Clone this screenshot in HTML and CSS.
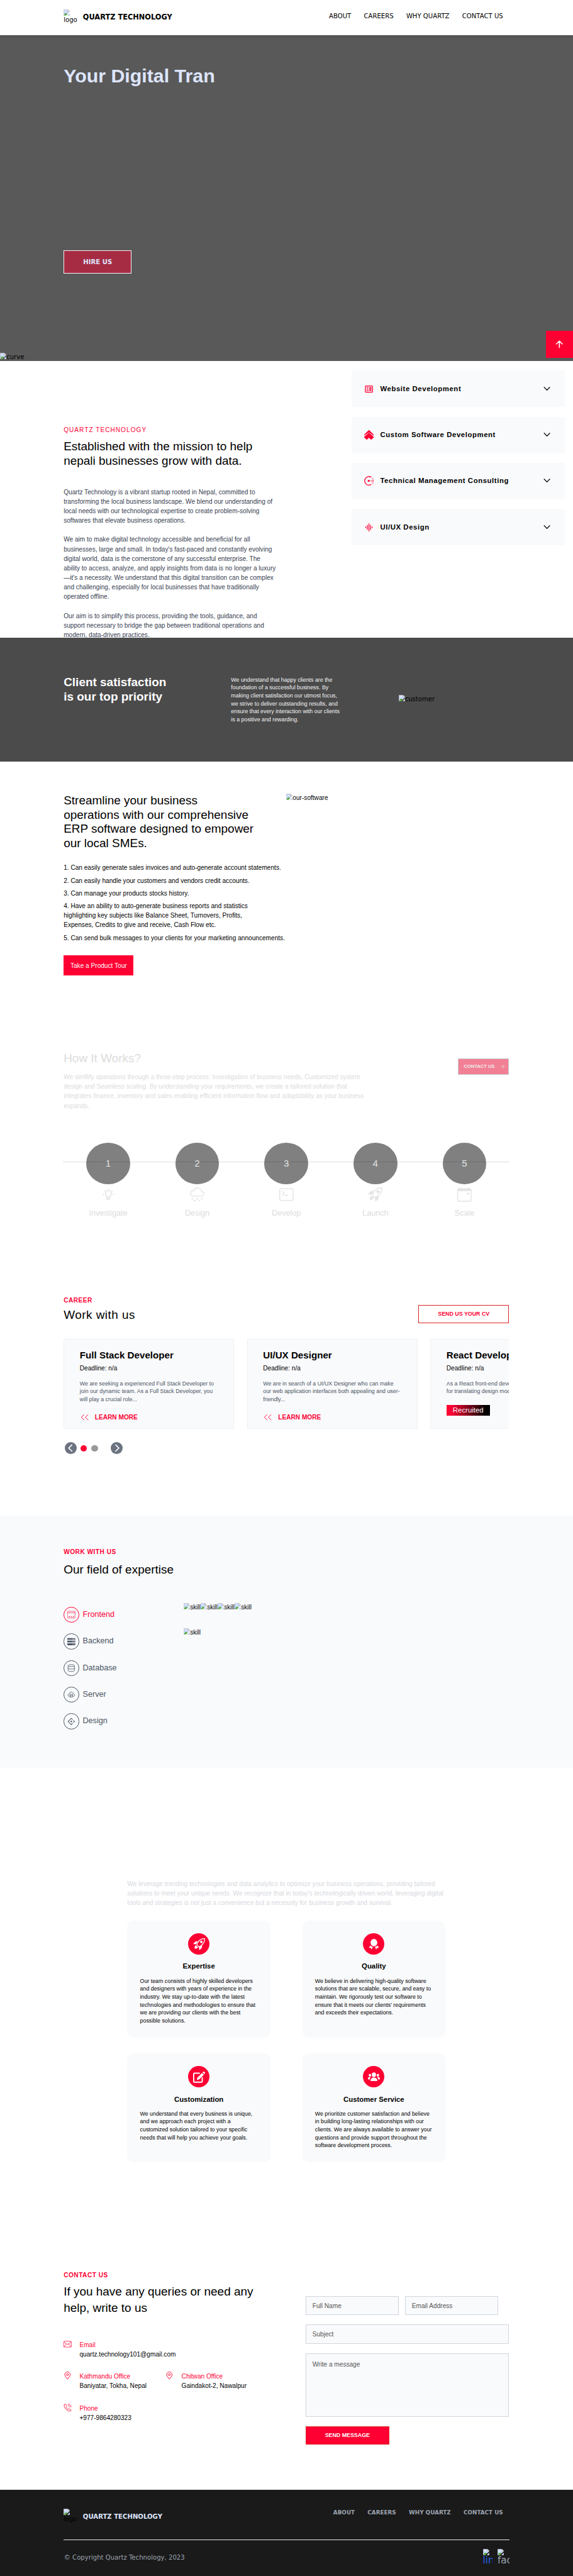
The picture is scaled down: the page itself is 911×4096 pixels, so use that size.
FILE: index.html
```html
<!DOCTYPE html>
<html lang="en">
<head>
<meta charset="utf-8">
<title>Quartz Technology</title>
<link rel="stylesheet" href="styles.css">
</head>
<body>
<svg class="defs" width="0" height="0">
  <symbol id="broken" viewBox="0 0 16 16">
    <path d="M.5.5h10.200l4.800 4.800v10.200H.5z" fill="#fff" stroke="#a0a0a0"/>
    <path d="M1 1h9.500v5H15v9H1z" fill="#c3d3f7"/>
    <path d="M3 5.500a1.500 1.500 0 0 1 2.500-1.500 1.400 1.400 0 0 1 2.300 1.500z" fill="#fff"/>
    <path d="M1 15c1-3.500 3-5.500 5.500-5.500S10 12 11 15z" fill="#56ab34"/>
    <path d="M16 5.500v3.500L9 16H5.500z" fill="var(--cut, #fff)"/>
    <path d="M10.700.5v4.800h4.800z" fill="#fff" stroke="#a0a0a0"/>
  </symbol>
  <symbol id="rocket" viewBox="0 0 16 16">
    <path d="M15.400.6C12.500.3 9.600 1.500 7.400 4 5.900 5.700 5 7.600 5.400 9c.3 1 1 1.500 1.800 1.800 1.500.5 3.300-.5 4.900-2.200 2.400-2.500 3.600-5 3.300-8z" fill="none" stroke="currentColor" stroke-width="1.100"/>
    <circle cx="11.100" cy="4.800" r="1.700"/>
    <path d="M6.400 4.100C4.900 3.700 3.500 3.900 2.500 4.900L0 7.800l3 .1 1.200.6c.2-1.600 1-3 2.200-4.400zM12 9.500c.3 1.500.1 3-.9 4L8.200 16 8 13l-.4-1.300c1.500-.2 2.900-1 4.400-2.200zM3.600 9.300C2.300 10.200 2 12 2 14c2 0 3.700-.5 4.700-1.800z"/>
  </symbol>
  <symbol id="chev" viewBox="0 0 24 24"><path d="M5 7.600l7 7.200 7-7.200" fill="none" stroke="#000" stroke-width="2" stroke-linecap="round" stroke-linejoin="round"/></symbol>
  <symbol id="dbl" viewBox="0 0 24 24"><path d="M11 5l-7.500 7 7.500 7M21 5l-7.500 7 7.500 7" fill="none" stroke="currentColor" stroke-width="1.400"/></symbol>
  <symbol id="pin" viewBox="0 0 20 20"><path d="M10 19C6.500 14.500 3.200 11.200 3.200 7.700a6.800 6.800 0 0 1 13.600 0c0 3.500-3.300 6.800-6.800 11.300z" fill="none" stroke="currentColor" stroke-width="1.500"/><circle cx="10" cy="7.800" r="2.300" fill="none" stroke="currentColor" stroke-width="1.500"/></symbol>
</svg>
<div class="page">
  <header class="top">
    <div class="brand">
      <span class="logo"><svg class="bi"><use href="#broken"/></svg><span>logo</span></span>
      <strong>QUARTZ TECHNOLOGY</strong>
    </div>
    <nav><a>ABOUT</a><a>CAREERS</a><a>WHY QUARTZ</a><a>CONTACT US</a></nav>
  </header>

  <section class="hero">
    <h1>Your Digital Tran</h1>
    <a class="hire">HIRE US</a>
    <span class="curve alt"><svg class="bi"><use href="#broken"/></svg>curve</span>
    <a class="to-top"><svg viewBox="0 0 20 20" width="20" height="20"><path d="M10 18V2.500M2.500 9.500L10 2l7.500 7.500" fill="none" stroke="#fff" stroke-width="2.600" stroke-linecap="round" stroke-linejoin="round"/></svg></a>
  </section>

  <section class="about">
    <div class="about-text">
      <p class="eyebrow thin">QUARTZ TECHNOLOGY</p>
      <h2>Established with the mission to help<br>nepali businesses grow with data.</h2>
      <p class="copy">Quartz Technology is a vibrant startup rooted in Nepal, committed to<br>transforming the local business landscape. We blend our understanding of<br>local needs with our technological expertise to create problem-solving<br>softwares that elevate business operations.</p>
      <p class="copy">We aim to make digital technology accessible and beneficial for all<br>businesses, large and small. In today's fast-paced and constantly evolving<br>digital world, data is the cornerstone of any successful enterprise. The<br>ability to access, analyze, and apply insights from data is no longer a luxury<br>—it's a necessity. We understand that this digital transition can be complex<br>and challenging, especially for local businesses that have traditionally<br>operated offline.</p>
      <p class="copy">Our aim is to simplify this process, providing the tools, guidance, and<br>support necessary to bridge the gap between traditional operations and<br>modern, data-driven practices.</p>
    </div>
    <div class="accordion">
      <div class="item"><svg class="ic24" viewBox="0 0 24 24"><rect x="3" y="4" width="18" height="16" rx="1.500" fill="none" stroke="currentColor" stroke-width="2"/><path d="M6 7h5v2H6zM6 11h5v2H6zM6 15h5v2H6z"/><path d="M14 8h3v8h-3z" fill="none" stroke="currentColor" stroke-width="2"/></svg><b>Website Development</b><svg class="ic24 chev"><use href="#chev"/></svg></div>
      <div class="item"><svg class="ic24" viewBox="0 0 24 24"><path d="M12 0c.6 0 1 .2 1.500.6l10 10c.5.500.5 1.400.5 2.900L12 5.400.0 13.500c0-1.500 0-2.400.5-2.900l10-10C11 .2 11.400 0 12 0z"/><path d="M12 6.500l11.300 9.200c.9.800.9 2.300 0 3.200l-4.200 4.200c-.9.900-2.200.9-3.100 0l-4-4-4 4c-.9.900-2.200.9-3.100 0L.7 18.900c-.9-.9-.9-2.400 0-3.200z"/></svg><b>Custom Software Development</b><svg class="ic24 chev"><use href="#chev"/></svg></div>
      <div class="item"><svg class="ic24" viewBox="0 0 24 24"><path d="M18 3a10.800 10.800 0 1 0 0 18" fill="none" stroke="currentColor" stroke-width="2.100"/><circle cx="11.500" cy="12" r="2.600"/><circle cx="16.500" cy="12" r="1.100"/><circle cx="19.600" cy="10" r="1"/><circle cx="19.600" cy="14" r="1"/><circle cx="20" cy="12" r=".8"/><circle cx="23" cy="12" r="1"/><circle cx="23" cy="9.700" r="1"/><circle cx="23" cy="14.300" r="1"/><circle cx="21.400" cy="6.400" r="1.100"/><circle cx="21.400" cy="17.700" r="1.100"/></svg><b>Technical Management Consulting</b><svg class="ic24 chev"><use href="#chev"/></svg></div>
      <div class="item"><svg class="ic24" viewBox="0 0 24 24"><path d="M11 2h2v20h-2zM7 6h2v12H7zM15 6h2v12h-2zM3 10h2v4H3zM19 10h2v4h-2z"/></svg><b>UI/UX Design</b><svg class="ic24 chev"><use href="#chev"/></svg></div>
    </div>
  </section>

  <section class="client">
    <h2>Client satisfaction<br>is our top priority</h2>
    <p>We understand that happy clients are the<br>foundation of a successful business. By<br>making client satisfaction our utmost focus,<br>we strive to deliver outstanding results, and<br>ensure that every interaction with our clients<br>is a positive and rewarding.</p>
    <span class="alt cust"><svg class="bi"><use href="#broken"/></svg>customer</span>
  </section>

  <section class="erp">
    <div class="erp-text">
      <h2>Streamline your business<br>operations with our comprehensive<br>ERP software designed to empower<br>our local SMEs.</h2>
      <ul>
        <li>1. Can easily generate sales invoices and auto-generate account statements.</li>
        <li>2. Can easily handle your customers and vendors credit accounts.</li>
        <li>3. Can manage your products stocks history.</li>
        <li>4. Have an ability to auto-generate business reports and statistics<br>highlighting key subjects like Balance Sheet, Turnovers, Profits,<br>Expenses, Credits to give and receive, Cash Flow etc.</li>
        <li>5. Can send bulk messages to your clients for your marketing announcements.</li>
      </ul>
      <a class="tour">Take a Product Tour</a>
    </div>
    <span class="alt sans"><svg class="bi"><use href="#broken"/></svg>our-software</span>
  </section>

  <section class="how">
    <div class="how-head">
      <div>
        <h2>How It Works?</h2>
        <p>We simflify operations through a three-step process: Investigation of business needs, Customized system<br>design and Seamless scaling. By understanding your requirements, we create a tailored solution that<br>integrates finance, inventory and sales enabling efficient information flow and adaptability as your business<br>expands.</p>
      </div>
      <a class="contact-btn">CONTACT US<svg viewBox="0 0 12 12" width="12" height="12"><path d="M1.500 6h9M6.500 1.500L11 6l-4.500 4.500" fill="none" stroke="currentColor"/></svg></a>
    </div>
    <div class="steps">
      <div class="step"><span class="num">1</span><svg viewBox="0 0 36 36"><g fill="none" stroke="currentColor" stroke-width="2.500" stroke-linecap="round"><path d="M14.500 25v-2.500c-2.500-1.800-4-4-4-7a7.500 7.500 0 0 1 15 0c0 3-1.500 5.200-4 7V25z"/><path d="M15 25v4c0 3 6 3 6 0v-4M18 4.500v1.500M8 8.500l1 1M28 8.500l-1 1M4.500 18H6M30 18h1.500"/></g></svg><span class="name">Investigate</span></div>
      <div class="step"><span class="num">2</span><svg viewBox="0 0 16 16"><path d="M13.405 4.277a5.001 5.001 0 0 0-9.499-1.004A3.500 3.500 0 1 0 3.500 10.250H13a3 3 0 0 0 .405-5.973zM8.500 1.250a4 4 0 0 1 3.976 3.555.5.5 0 0 0 .5.445H13a2 2 0 0 1-.001 4H3.500a2.500 2.500 0 1 1 .605-4.926.5.5 0 0 0 .596-.329A4.002 4.002 0 0 1 8.500 1.250z"/><path id="flake" d="M2.600 11.600v2.200M1.700 12.200l1.800 1M3.500 12.200l-1.800 1" stroke="currentColor" stroke-width=".6"/><use href="#flake" x="5.400"/><use href="#flake" x="10.700"/><use href="#flake" x="2.700" y="2.100"/><use href="#flake" x="8.200" y="2.100"/></svg><span class="name">Design</span></div>
      <div class="step"><span class="num">3</span><svg viewBox="0 0 16 16"><path d="M6 9a.5.5 0 0 1 .5-.5h3a.5.5 0 0 1 0 1h-3A.5.5 0 0 1 6 9zM3.854 4.146a.5.5 0 1 0-.708.708L4.793 6.500 3.146 8.146a.5.5 0 1 0 .708.708l2-2a.5.5 0 0 0 0-.708l-2-2z"/><path d="M2 1a2 2 0 0 0-2 2v10a2 2 0 0 0 2 2h12a2 2 0 0 0 2-2V3a2 2 0 0 0-2-2H2zm12 1a1 1 0 0 1 1 1v10a1 1 0 0 1-1 1H2a1 1 0 0 1-1-1V3a1 1 0 0 1 1-1h12z"/></svg><span class="name">Develop</span></div>
      <div class="step"><span class="num">4</span><svg><use href="#rocket"/></svg><span class="name">Launch</span></div>
      <div class="step"><span class="num">5</span><svg viewBox="0 0 16 16"><path d="M2 1h1V0h1v1h8V0h1v1h1a2 2 0 0 1 2 2v11a2 2 0 0 1-2 2H2a2 2 0 0 1-2-2V3a2 2 0 0 1 2-2zM1 4v10a1 1 0 0 0 1 1h12a1 1 0 0 0 1-1V4z"/><rect x="11" y="6" width="2" height="2" rx=".5"/></svg><span class="name">Scale</span></div>
    </div>
  </section>

  <section class="career">
    <p class="eyebrow">CAREER</p>
    <div class="career-head"><h2>Work with us</h2><a class="cv">SEND US YOUR CV</a></div>
    <div class="jobs">
      <article><h3>Full Stack Developer</h3><p class="dl">Deadline: n/a</p><p class="ds">We are seeking a experienced Full Stack Developer to<br>join our dynamic team. As a Full Stack Developer, you<br>will play a crucial role...</p><a class="more"><svg><use href="#dbl"/></svg>LEARN MORE</a></article>
      <article><h3>UI/UX Designer</h3><p class="dl">Deadline: n/a</p><p class="ds">We are in search of a UI/UX Designer who can make<br>our web application interfaces both appealing and user-<br>friendly...</p><a class="more"><svg><use href="#dbl"/></svg>LEARN MORE</a></article>
      <article><h3>React Developer</h3><p class="dl">Deadline: n/a</p><p class="ds">As a React front-end developer, you are responsible<br>for translating design mockups into code.</p><span class="badge">Recruited</span></article>
    </div>
    <div class="pager">
      <span class="arr"><svg viewBox="0 0 30 30"><path d="M18 7l-8 8 8 8" fill="none" stroke="#fff" stroke-width="2.600" stroke-linecap="round"/></svg></span>
      <i class="dot on"></i><i class="dot"></i>
      <span class="arr next"><svg viewBox="0 0 30 30"><path d="M12.500 7l8 8-8 8" fill="none" stroke="#fff" stroke-width="2.600" stroke-linecap="round"/></svg></span>
    </div>
  </section>

  <section class="field">
    <p class="eyebrow">WORK WITH US</p>
    <h2>Our field of expertise</h2>
    <div class="field-body">
      <ul class="tabs">
        <li class="on"><span><svg viewBox="0 0 20 20"><path d="M2.500 1.500h15a2 2 0 0 1 2 2v13a2 2 0 0 1-2 2h-15a2 2 0 0 1-2-2v-13a2 2 0 0 1 2-2zM.5 5.500h19" fill="none" stroke="currentColor"/><circle cx="5" cy="15" r="1.300"/><circle cx="10" cy="15" r="1.300"/><circle cx="15" cy="15" r="1.300"/></svg></span>Frontend</li>
        <li><span><svg viewBox="0 0 20 20"><path fill-rule="evenodd" d="M1 1h18a1 1 0 0 1 1 1v3H0V2a1 1 0 0 1 1-1zM13 2.500v1.500h1.500V2.500zM16 2.500v1.500h1.500V2.500zM0 7.500h20v4.500H0zM13 9v1.500h1.500V9zM16 9v1.500h1.500V9zM0 14.300h20v3.500a1 1 0 0 1-1 1H1a1 1 0 0 1-1-1zM13 15.700v1.500h1.500v-1.500zM16 15.700v1.500h1.500v-1.500z"/></svg></span>Backend</li>
        <li><span><svg viewBox="0 0 20 20"><g fill="none" stroke="currentColor" stroke-width="1.300"><ellipse cx="10" cy="4" rx="8" ry="2.700"/><path d="M2 4v12c0 3.500 16 3.500 16 0V4M2 10c0 3.500 16 3.500 16 0"/></g></svg></span>Database</li>
        <li><span><svg viewBox="0 0 20 20"><g fill="none" stroke="currentColor" stroke-width="1.200"><path d="M5 15.200A3.500 3.500 0 0 1 4.600 8.300a5.500 5.500 0 0 1 10.800 0A3.500 3.500 0 0 1 15 15.200"/><path d="M6.500 9.500h7v7h-7zM6.500 13h7M8 11.300h1M8 14.800h1"/></g></svg></span>Server</li>
        <li><span><svg viewBox="0 0 20 20"><path d="M13.500 5.500L10 2l-8 8 8 8 3.500-3.500M15.200 7.200L18 10l-2.800 2.800" fill="none" stroke="currentColor" stroke-width="1.600"/><circle cx="10" cy="10" r="2"/></svg></span>Design</li>
      </ul>
      <div class="skills">
        <div><span class="alt sans"><svg class="bi"><use href="#broken"/></svg>skill</span><span class="alt sans"><svg class="bi"><use href="#broken"/></svg>skill</span><span class="alt sans"><svg class="bi"><use href="#broken"/></svg>skill</span><span class="alt sans"><svg class="bi"><use href="#broken"/></svg>skill</span></div>
        <div><span class="alt sans"><svg class="bi"><use href="#broken"/></svg>skill</span></div>
      </div>
    </div>
  </section>

  <section class="why">
    <p class="lead">We leverage trending technologies and data analytics to optimize your business operations, providing tailored<br>solutions to meet your unique needs. We recognize that in today's technologically driven world, leveraging digital<br>tools and strategies is not just a convenience but a necessity for business growth and survival.</p>
    <div class="cards">
      <article><span class="orb"><svg><use href="#rocket"/></svg></span><h3>Expertise</h3><p>Our team consists of highly skilled developers<br>and designers with years of experience in the<br>industry. We stay up-to-date with the latest<br>technologies and methodologies to ensure that<br>we are providing our clients with the best<br>possible solutions.</p></article>
      <article><span class="orb"><svg viewBox="0 0 30 30"><ellipse cx="15" cy="11" rx="8.500" ry="9.300"/><path d="M5.500 18l-3 6 4-.3 3 4.300 3-6.500c-3-.5-5-2-7-3.500zM24.500 18l3 6-4-.3-3 4.300-3-6.500c3-.5 5-2 7-3.500z"/></svg></span><h3>Quality</h3><p>We believe in delivering high-quality software<br>solutions that are scalable, secure, and easy to<br>maintain. We rigorously test our software to<br>ensure that it meets our clients' requirements<br>and exceeds their expectations.</p></article>
      <article><span class="orb"><svg viewBox="0 0 30 30"><path d="M17 5.500H3.500a2 2 0 0 0-2 2V26a2 2 0 0 0 2 2H21a2 2 0 0 0 2-2V16" fill="none" stroke="currentColor" stroke-width="3"/><path d="M9.500 22.500l1-5.500L22.500 5l4.500 4.500-12 12zM23.800 3.700l1.500-1.500c.8-.8 2-.8 2.800 0l1.500 1.500c.8.8.8 2 0 2.800L28.200 8z"/></svg></span><h3>Customization</h3><p>We understand that every business is unique,<br>and we approach each project with a<br>customized solution tailored to your specific<br>needs that will help you achieve your goals.</p></article>
      <article><span class="orb"><svg viewBox="0 0 30 30"><ellipse cx="15" cy="9.500" rx="5.300" ry="5.800"/><ellipse cx="5" cy="10.500" rx="3" ry="3.500"/><ellipse cx="25" cy="10.500" rx="3" ry="3.500"/><path d="M6.500 24c0-5 3-7.500 8.500-7.500s8.500 2.500 8.500 7.500c0 1-.5 1.500-1.500 1.500H8c-1 0-1.500-.5-1.500-1.500zM0 19.500c0-3.500 2-4.500 7.500-4.500-2 1.500-3 4-3 6.500H1.500c-1 0-1.500-.7-1.500-2zM30 19.500c0-3.500-2-4.500-7.500-4.500 2 1.500 3 4 3 6.500h3c1 0 1.500-.7 1.500-2z"/></svg></span><h3>Customer Service</h3><p>We prioritize customer satisfaction and believe<br>in building long-lasting relationships with our<br>clients. We are always available to answer your<br>questions and provide support throughout the<br>software development process.</p></article>
    </div>
  </section>

  <section class="contact">
    <div class="info">
      <p class="eyebrow">CONTACT US</p>
      <h2>If you have any queries or need any<br>help, write to us</h2>
      <div class="rows">
        <div class="row"><svg viewBox="0 0 20 20"><g fill="none" stroke="currentColor" stroke-width="1.200"><rect x=".6" y="2.600" width="18.800" height="14.800" rx="1.500"/><path d="M.8 4.500l9.200 6.500 9.200-6.500M.8 16.500l7-7M19.200 16.500l-7-7"/></g></svg><p><em>Email</em>quartz.technology101@gmail.com</p></div>
        <div class="row"><svg><use href="#pin"/></svg><p><em>Kathmandu Office</em>Baniyatar, Tokha, Nepal</p></div>
        <div class="row"><svg><use href="#pin"/></svg><p><em>Chitwan Office</em>Gaindakot-2, Nawalpur</p></div>
        <div class="row"><svg viewBox="0 0 20 20"><g fill="none" stroke="currentColor" stroke-width="1.400" stroke-linecap="round"><path d="M2 2.500C4 .5 5.500 1 6.500 2.800L8 5.500c.5 1-1.500 2-1.500 3 0 1.500 3.500 5.500 5 5.500 1 0 2-1.500 3-1l3.500 2c1.500 1 .5 4-2 4C10 19-1.500 8 2 2.500zM12 1c4 .5 6.500 3 7 7M11.500 4.500c2.300.3 4 2 4.200 4"/></g></svg><p><em>Phone</em>+977-9864280323</p></div>
      </div>
    </div>
    <form>
      <div class="pair"><div class="inp">Full Name</div><div class="inp">Email Address</div></div>
      <div class="inp">Subject</div>
      <div class="inp area">Write a message</div>
      <a class="send">SEND MESSAGE</a>
    </form>
  </section>

  <footer>
    <div class="foot-top">
      <div class="brand">
        <span class="logo"><svg class="bi"><use href="#broken"/></svg><span>logo</span></span>
        <strong>QUARTZ TECHNOLOGY</strong>
      </div>
      <nav><a>ABOUT</a><a>CAREERS</a><a>WHY QUARTZ</a><a>CONTACT US</a></nav>
    </div>
    <div class="foot-bottom">
      <p>© Copyright Quartz Technology, 2023</p>
      <div class="social">
        <span class="lin"><svg class="bi"><use href="#broken"/></svg><span>linkedin</span></span>
        <span class="fb"><svg class="bi"><use href="#broken"/></svg><span>facebook</span></span>
      </div>
    </div>
  </footer>
</div>
</body>
</html>
```
FILE: styles.css
```css
* { box-sizing: border-box; margin: 0; padding: 0; }
html, body { background: #fff; overflow: hidden; }
.defs { position: absolute; }
.page {
  zoom: 0.6323;
  font: 16px/24px "Liberation Sans", Arial, sans-serif;
  color: #000;
  height: 6478px;
  overflow: hidden;
  white-space: nowrap;
}
svg { fill: currentColor; flex: none; display: block; }
ul { list-style: none; }
h2 { font-size: 30px; line-height: 36px; font-weight: 400; }
.bi { width: 16px; height: 16px; }
.alt { display: flex; align-items: flex-start; font: 16px/22px "DejaVu Sans", sans-serif; }
.alt.sans { font-family: "Liberation Sans", Arial, sans-serif; }
.eyebrow { color: #ff0033; font-weight: 700; letter-spacing: .8px; }
.eyebrow.thin { font-weight: 400; letter-spacing: 1.6px; }

/* header */
.top {
  position: relative; z-index: 2; height: 88px; padding: 24px 160px 0;
  display: flex; justify-content: space-between; background: #fff;
  box-shadow: 0 2px 8px rgba(0, 0, 0, .2);
  font-family: "DejaVu Sans", sans-serif;
}
.brand { display: flex; gap: 13.500px; }
.logo { width: 35px; line-height: 22px; }
.logo span { display: block; }
.brand strong { font-size: 18px; line-height: 28px; margin-top: 6px; }
nav { display: flex; gap: 32px; padding: 4px 16px 0 0; }

/* hero */
.hero { position: relative; height: 820px; padding: 80px 160px 0; background: #595959; --cut: #595959; }
.hero h1 { font-size: 48px; line-height: 48px; color: #dee5fd; }
.hire {
  display: flex; align-items: center; justify-content: center;
  width: 171px; height: 58px; margin-top: 414px;
  background: #a62c44; border: 1px solid #f3f4f6; color: #dee5fd;
  font: 700 16px/24px "DejaVu Sans", sans-serif;
}
.curve { position: absolute; left: 0; bottom: -2px; }
.to-top {
  position: absolute; right: 0; bottom: 8px; width: 68px; height: 68px;
  display: flex; align-items: center; justify-content: center; background: #ff0033;
}

/* about */
.about { height: 695px; overflow: hidden; display: flex; padding-left: 160px; }
.about-text { width: 724px; padding-top: 161.500px; }
.about h2 { margin: 12.700px 0 46.800px; }
.copy { color: #374151; margin-bottom: 24px; }
.accordion { width: 536px; padding-top: 24px; display: flex; flex-direction: column; gap: 24px; }
.item { height: 92px; flex: none; padding: 0 32px; display: flex; align-items: center; gap: 16px; background: #f9fafc; color: #ff0033; }
.item b { color: #000; font-size: 18px; letter-spacing: .9px; }
.ic24 { width: 24px; height: 24px; }
.chev { margin-left: auto; }

/* client */
.client {
  height: 312px; padding: 95.600px 0 0 160px; background: #4b4b4b; --cut: #4b4b4b;
  display: grid; grid-template-columns: 421px 421px 1fr; align-items: start;
}
.client h2 { font-weight: 700; color: #fff; }
.client p { font-size: 14px; line-height: 20px; color: #f3f4f6; margin-top: 1px; }
.cust { margin-top: 49px; }

/* erp */
.erp { height: 645px; padding: 80.600px 0 0 160px; display: grid; grid-template-columns: 560px 1fr; align-items: start; }
.erp ul { margin: 31px 0 32.500px; display: grid; gap: 8px; }
.tour { display: flex; align-items: center; justify-content: center; width: 176px; height: 50px; background: #ff0033; color: #fff; }

/* how it works */
.how { height: 640px; padding: 84.600px 160px 0; width: 1440px; color: #dcdcdc; }
.how-head { display: flex; justify-content: space-between; height: 229.400px; }
.how-head p { margin-top: 16px; }
.contact-btn {
  width: 128.500px; height: 42px; margin-top: 16.400px; padding-left: 13px;
  display: flex; align-items: center; gap: 13px;
  background: #f28095; border: 1px solid #c8ccd2; color: #eeeeee;
  font-size: 12px; font-weight: 700;
}
.steps { position: relative; display: grid; grid-template-columns: repeat(5, 224px); }
.steps::after { content: ""; position: absolute; left: 0; right: 0; top: 46.500px; border-top: 1.600px dotted rgba(0, 0, 0, .26); }
.step { display: flex; flex-direction: column; align-items: center; }
.num { width: 110px; height: 104px; border-radius: 50%; background: #808080; color: #e6e6e6; font-size: 24px; line-height: 103px; text-align: center; }
.step svg { width: 36px; height: 36px; margin: 8px 0 16px; color: #e3e3e3; }
.name { font-size: 20px; line-height: 28px; }

/* career */
.career { height: 611px; width: 1440px; padding: 57.500px 160px 0; }
.career-head { display: flex; justify-content: space-between; height: 85.500px; padding-top: .5px; }
.career-head h2 { margin-top: 7.300px; letter-spacing: .75px; }
.cv { width: 228px; height: 46px; border: 1px solid #dc2626; color: #ff0033; font-size: 14px; font-weight: 700; display: flex; align-items: center; justify-content: center; }
.jobs { display: flex; gap: 32px; overflow: hidden; }
.jobs article { flex: none; width: 429px; height: 226px; padding: 24px 39px; background: #f9fafc; border: 1px solid #f0f1f3; }
.jobs h3 { font-size: 24px; line-height: 32px; }
.dl { margin: 4px 0 17px; }
.ds { font-size: 14px; line-height: 20px; color: #4b5563; }
.more { display: flex; gap: 14px; margin-top: 23px; color: #ff0033; font-weight: 700; }
.more svg { width: 24px; height: 24px; }
.badge { display: inline-block; margin-top: 23px; padding: 0 16px; font-size: 18px; line-height: 28px; color: #fff; background: linear-gradient(90deg, #ff0033 10%, #000 90%); }
.pager { display: flex; align-items: center; margin-top: 34px; padding-left: 3px; }
.arr { width: 30px; height: 30px; border-radius: 50%; background: #6b7280; margin-right: 9px; }
.arr.next { margin-left: 20px; }
.dot { width: 16px; height: 16px; border-radius: 50%; background: #999; margin: 2px 12px 0 0; }
.dot.on { background: #ff0033; }

/* field of expertise */
.field { height: 635px; padding: 80px 0 0 160px; background: #f9fafc; --cut: #f9fafc; }
.field h2 { margin-top: 15.600px; }
.field-body { display: grid; grid-template-columns: 302px 1fr; margin-top: 64.400px; }
.tabs { display: grid; gap: 27px; padding-top: 10px; }
.tabs li { display: flex; align-items: center; gap: 8px; font-size: 20px; color: #4b5563; }
.tabs span { width: 40px; height: 40px; border: 2px solid; border-radius: 50%; display: flex; align-items: center; justify-content: center; }
.tabs svg { width: 20px; height: 20px; }
.tabs .on { color: #ff0033; }
.skills > div { display: flex; height: 64px; }
.skills .alt { width: 42.700px; }

/* why */
.why { height: 1174px; padding: 279.500px 0 0 320px; }
.lead { color: #d6d9de; }
.cards { margin-top: 32.500px; display: grid; grid-template-columns: 360px 360px; gap: 40px 80px; }
.cards article { padding: 32px; border-radius: 16px; background: #f9fafc; }
.orb { display: flex; align-items: center; justify-content: center; width: 54px; height: 54px; margin: 0 auto 16px; border-radius: 50%; background: #ff0033; color: #fff; }
.orb svg { width: 30px; height: 30px; }
.cards h3 { font-size: 18px; line-height: 28px; text-align: center; margin-bottom: 12px; }
.cards p { font-size: 14px; line-height: 20px; }

/* contact */
.contact { height: 639px; padding: 89.300px 0 0 160px; display: grid; grid-template-columns: 608px 512px; }
.contact h2 { line-height: 41px; margin-top: 8.800px; }
.rows { display: grid; grid-template-columns: 256.500px 1fr; gap: 32px 0; margin-top: 60.500px; }
.row { display: flex; gap: 20px; }
.row:first-child, .row:last-child { grid-column: 1 / 3; }
.row svg { width: 20px; height: 20px; color: #ff0033; }
.row em { display: block; font-style: normal; color: #ff0033; }
form { padding-top: 64.700px; }
.pair { display: flex; gap: 16px; }
.pair .inp { width: 234px; }
.inp { height: 48px; margin-bottom: 24px; padding: 11px 16px; border: 1px solid #d1d5db; background: #f9fafc; color: #555; }
.area { height: 160px; padding-top: 15px; margin-bottom: 23px; }
.send { display: flex; align-items: center; justify-content: center; width: 211px; height: 46px; background: #ff0033; border: 1px solid #dc2626; color: #fff; font-size: 14px; font-weight: 700; }

/* footer */
footer { height: 219px; border-top: 2px solid #e5e7eb; padding: 48px 160px 0; width: auto; background: #1a1a1a; --cut: #1a1a1a; font-family: "DejaVu Sans", sans-serif; }
.foot-top { display: flex; justify-content: space-between; height: 80px; border-bottom: 1.600px solid #e5e7eb; }
footer .brand strong { font-size: 16px; line-height: 24px; margin-top: 7.500px; color: #dee5fd; }
footer nav { padding-top: 0; font-size: 14px; line-height: 20px; font-weight: 700; color: #9ca3af; }
.foot-bottom { display: flex; justify-content: space-between; color: #9ca3af; }
.foot-bottom p { margin-top: 31.500px; padding-left: 1px; }
.social { display: flex; gap: 12px; margin-top: 21px; font-size: 24px; line-height: 28px; }
.social > span { overflow: hidden; height: 40px; }
.social span span { display: block; }
.lin { width: 25px; color: #2563eb; }
.fb { width: 30px; }
```
